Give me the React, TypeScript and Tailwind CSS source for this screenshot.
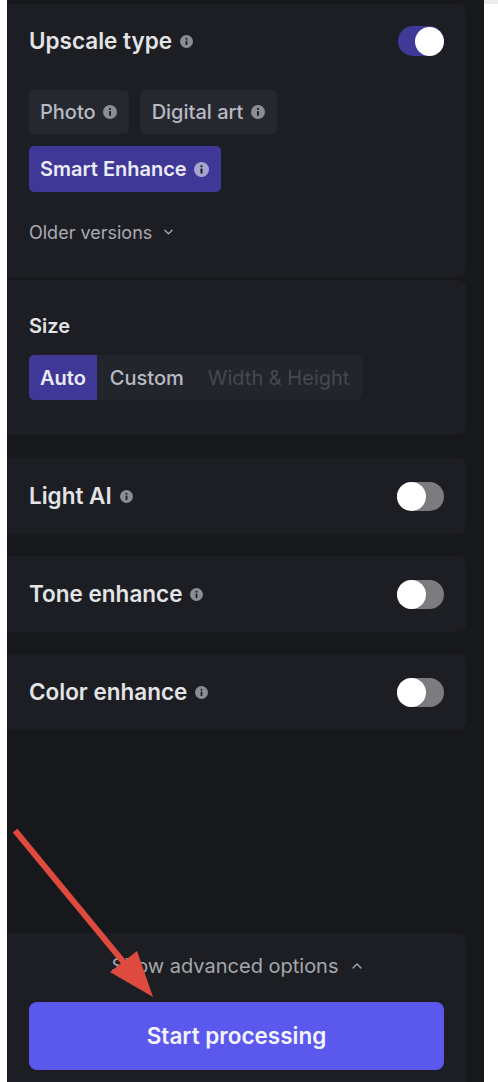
import React from "react";

function Info({ className = "" }: { className?: string }) {
  return (
    <svg viewBox="0 0 16 16" className={className} aria-hidden>
      <circle cx="8" cy="8" r="8" fill="currentColor" />
      <circle cx="8" cy="4.6" r="1.2" fill="#1d1e23" />
      <rect x="6.9" y="6.8" width="2.2" height="5.4" rx="0.6" fill="#1d1e23" />
    </svg>
  );
}

function Toggle({ on }: { on: boolean }) {
  return (
    <div
      className={
        on
          ? "w-[46px] h-[30px] rounded-full bg-[#3f3a98] flex items-center justify-end"
          : "w-[47px] h-[29px] rounded-full bg-[#7c7c80] flex items-center justify-start"
      }
    >
      <div className="w-[29px] h-[29px] rounded-full bg-white" />
    </div>
  );
}

function ToggleCard({ label }: { label: string }) {
  return (
    <div className="h-[76px] rounded-r-lg bg-[#1d1e23] px-[22px] flex items-center justify-between">
      <div className="flex items-center gap-[8px]">
        <span className="text-[22.5px] font-semibold text-[#e3e4e7] leading-none">{label}</span>
        <Info className="w-[13px] h-[13px] text-[#8b8d94]" />
      </div>
      <Toggle on={false} />
    </div>
  );
}

export default function App() {
  return (
    <div
      className="relative w-[498px] h-[1082px] bg-white flex overflow-hidden"
      style={{ fontFamily: "Inter, 'Noto Sans', sans-serif" }}
    >
      <div className="w-[7px] shrink-0" />
      <div className="w-[477px] shrink-0 bg-[#17181c] flex flex-col pt-[4px] pr-[18px]">
        {/* Upscale type card */}
        <div className="rounded-r-lg bg-[#1d1e23] pt-[22px] px-[22px] pb-[32px]">
          <div className="h-[30px] flex items-center justify-between">
            <div className="flex items-center gap-[8px]">
              <span className="text-[22.5px] font-semibold text-[#e3e4e7] leading-none">Upscale type</span>
              <Info className="w-[13px] h-[13px] text-[#8b8d94]" />
            </div>
            <Toggle on={true} />
          </div>
          <div className="mt-[34px] flex flex-wrap gap-x-[11px] gap-y-[12px] w-[300px]">
            <div className="h-[44px] rounded-[5px] bg-[#262830] pl-[11px] pr-[12px] flex items-center gap-[7px]">
              <span className="text-[20px] font-medium text-[#b8bac1]">Photo</span>
              <Info className="w-[14px] h-[14px] text-[#8b8d94]" />
            </div>
            <div className="h-[44px] rounded-[5px] bg-[#262830] pl-[12px] pr-[12px] flex items-center gap-[8px]">
              <span className="text-[20px] font-medium text-[#b8bac1]">Digital art</span>
              <Info className="w-[14px] h-[14px] text-[#8b8d94]" />
            </div>
            <div className="h-[46px] rounded-[5px] bg-[#3f3897] pl-[11px] pr-[12px] flex items-center gap-[7px]">
              <span className="text-[20px] font-semibold text-[#ebeaf5]">Smart Enhance</span>
              <Info className="w-[15px] h-[15px] text-[#a7a4cf]" />
            </div>
          </div>
          <div className="mt-[27px] h-[26px] flex items-center gap-[12px]">
            <span className="text-[18px] text-[#a9abb3]">Older versions</span>
            <svg viewBox="0 0 10 6" className="w-[9px] h-[6px] text-[#a9abb3]" fill="none">
              <path d="M1 1l4 4 4-4" stroke="currentColor" strokeWidth="1.4" strokeLinecap="round" strokeLinejoin="round" />
            </svg>
          </div>
        </div>

        {/* Size card */}
        <div className="mt-[3px] rounded-r-lg bg-[#1d1e23] pt-[32px] px-[22px] pb-[35px]">
          <div className="h-[28px] flex items-center">
            <span className="text-[20px] font-semibold text-[#e3e4e7]">Size</span>
          </div>
          <div className="mt-[15px] h-[45px] inline-flex items-stretch rounded-[5px] bg-[#23252c] overflow-hidden">
            <div className="bg-[#3f3897] px-[11px] flex items-center">
              <span className="text-[20px] font-semibold text-[#ebeaf5]">Auto</span>
            </div>
            <div className="pl-[13px] pr-[24px] flex items-center">
              <span className="text-[20px] font-medium text-[#b8bac1]">Custom</span>
            </div>
            <div className="pr-[13px] flex items-center">
              <span className="text-[20px] text-[#464852]">Width &amp; Height</span>
            </div>
          </div>
        </div>

        <div className="mt-[23px]">
          <ToggleCard label="Light AI" />
        </div>
        <div className="mt-[22px]">
          <ToggleCard label="Tone enhance" />
        </div>
        <div className="mt-[22px]">
          <ToggleCard label="Color enhance" />
        </div>

        {/* Bottom card */}
        <div className="mt-auto rounded-tr-lg bg-[#1d1e23] pt-[19px] px-[22px] pb-[12px]">
          <div className="h-[28px] flex items-center justify-center gap-[13px]">
            <span className="text-[20px] text-[#a5a7ae]">Show advanced options</span>
            <svg viewBox="0 0 10 6" className="w-[10px] h-[6px] text-[#a5a7ae]" fill="none">
              <path d="M1 5l4-4 4 4" stroke="currentColor" strokeWidth="1.4" strokeLinecap="round" strokeLinejoin="round" />
            </svg>
          </div>
          <button className="mt-[22px] w-full h-[68px] rounded-[8px] bg-[#5b58ee] flex items-center justify-center">
            <span className="text-[22.5px] font-semibold text-[#f4f4ff]">Start processing</span>
          </button>
        </div>
      </div>
      <div className="flex-1 flex flex-col">
        <div className="h-[4px] bg-[#ececec]" />
      </div>

      {/* Red annotation arrow */}
      <svg
        className="absolute left-0 top-0 pointer-events-none"
        width="498"
        height="1082"
        viewBox="0 0 498 1082"
      >
        <line x1="17" y1="833" x2="135" y2="976" stroke="#df4a3f" strokeWidth="6" strokeLinecap="square" />
        <polygon points="153,997 110,972 137,951" fill="#df4a3f" />
      </svg>
    </div>
  );
}
